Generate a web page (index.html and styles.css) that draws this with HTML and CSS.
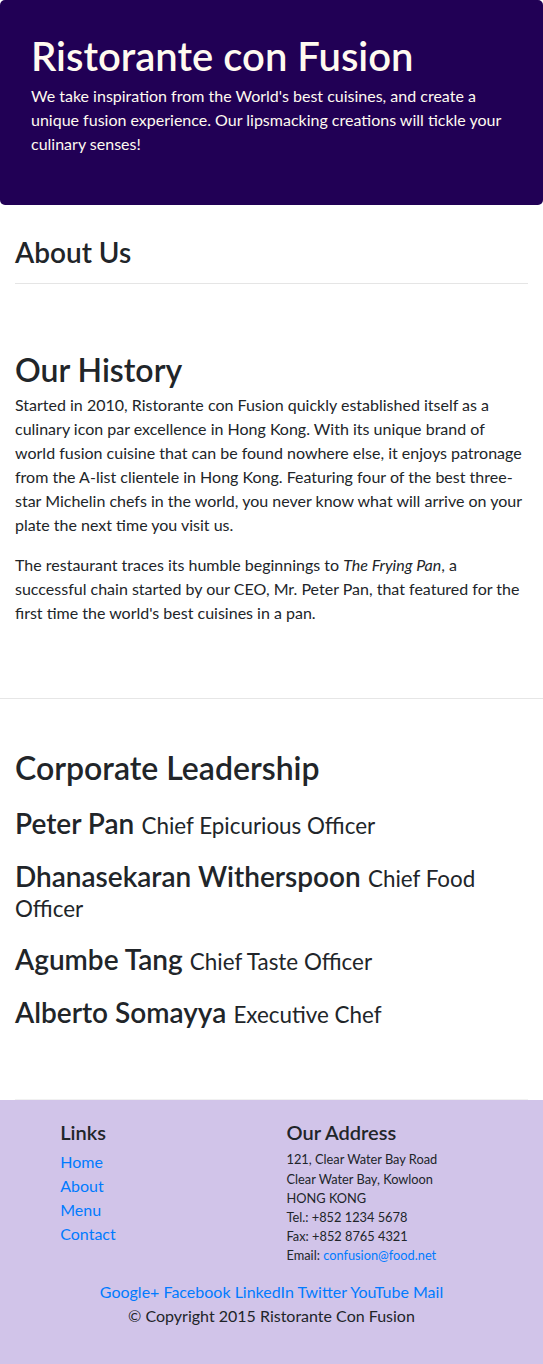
FILE: index.html
```html
<!DOCTYPE html>
<html lang="en">
<head>
<meta charset="utf-8">
<title>Ristorante con Fusion - About Us</title>
<link rel="stylesheet" href="styles.css">
</head>
<body>
<header class="jumbotron">
  <div class="jumbo-inner">
    <h1 class="jumbo-title">Ristorante con Fusion</h1>
    <p class="jumbo-text">We take inspiration from the World's best cuisines, and create a unique fusion experience. Our lipsmacking creations will tickle your culinary senses!</p>
  </div>
</header>

<main class="container">
  <div class="page-head">
    <h3 class="page-title">About Us</h3>
    <hr class="page-rule">
  </div>

  <section class="row-content history">
    <h2 class="section-title">Our History</h2>
    <p class="para">Started in 2010, Ristorante con Fusion quickly established itself as a culinary icon par excellence in Hong Kong. With its unique brand of world fusion cuisine that can be found nowhere else, it enjoys patronage from the A-list clientele in Hong Kong. Featuring four of the best three-star Michelin chefs in the world, you never know what will arrive on your plate the next time you visit us.</p>
    <p class="para">The restaurant traces its humble beginnings to <em>The Frying Pan</em>, a successful chain started by our CEO, Mr. Peter Pan, that featured for the first time the world's best cuisines in a pan.</p>
  </section>

  <section class="row-content leadership">
    <h2 class="section-title lead-title">Corporate Leadership</h2>
    <div class="leader"><span class="leader-name">Peter Pan</span> <small class="leader-role">Chief Epicurious Officer</small></div>
    <div class="leader"><span class="leader-name">Dhanasekaran Witherspoon</span> <small class="leader-role">Chief Food Officer</small></div>
    <div class="leader"><span class="leader-name">Agumbe Tang</span> <small class="leader-role">Chief Taste Officer</small></div>
    <div class="leader"><span class="leader-name">Alberto Somayya</span> <small class="leader-role">Executive Chef</small></div>
  </section>
</main>

<footer class="footer">
  <div class="footer-row">
    <div class="footer-col links-col">
      <h5 class="footer-title">Links</h5>
      <ul class="footer-links">
        <li><a href="#">Home</a></li>
        <li><a href="#">About</a></li>
        <li><a href="#">Menu</a></li>
        <li><a href="#">Contact</a></li>
      </ul>
    </div>
    <div class="footer-col address-col">
      <h5 class="footer-title">Our Address</h5>
      <address class="address">
        121, Clear Water Bay Road<br>
        Clear Water Bay, Kowloon<br>
        HONG KONG<br>
        Tel.: +852 1234 5678<br>
        Fax: +852 8765 4321<br>
        Email: <a href="#">confusion@food.net</a>
      </address>
    </div>
  </div>
  <div class="social">
    <a href="#">Google+</a> <a href="#">Facebook</a> <a href="#">LinkedIn</a> <a href="#">Twitter</a> <a href="#">YouTube</a> <a href="#">Mail</a>
  </div>
  <p class="copyright">© Copyright 2015 Ristorante Con Fusion</p>
</footer>
</body>
</html>
```
FILE: styles.css
```css
html, body {
  margin: 0;
  padding: 0;
}
body {
  font-family: Lato, "Liberation Sans", sans-serif;
  font-size: 16px;
  line-height: 24px;
  color: #212529;
  background: #fff;
}
a {
  color: #007bff;
  text-decoration: none;
}

/* Jumbotron */
.jumbotron {
  background: #210055;
  color: #fffaf0;
  border-radius: 5px;
  padding: 32px 16px 33px;
  margin: 0 0 31px;
}
.jumbo-inner {
  padding: 0 15px;
}
.jumbo-title {
  font-size: 40px;
  line-height: 48px;
  font-weight: 600;
  margin: 0 0 4px;
}
.jumbo-text {
  margin: 0 0 16px;
}

/* Main */
.container {
  padding: 0 15px;
}
.page-title {
  font-size: 28px;
  line-height: 33.6px;
  font-weight: 600;
  margin: 0 0 13px;
}
.page-rule {
  border: 0;
  border-top: 1px solid rgba(0, 0, 0, 0.1);
  margin: 0 0 17px;
}
.history {
  margin: 0 -15px;
  padding: 50px 15px 57px;
  border-bottom: 1px solid #e6e6e6;
}
.section-title {
  font-size: 32px;
  line-height: 38.4px;
  font-weight: 600;
  margin: 0 0 4px;
}
.para {
  margin: 0 0 16px;
}
.leadership {
  padding: 50px 0 49px;
  border-bottom: 1px solid #f1f1f1;
}
.lead-title {
  margin-bottom: 21px;
}
.leader {
  font-size: 28px;
  line-height: 30px;
  margin: 0 0 23px;
}
.leader-name {
  font-weight: 600;
}
.leader-role {
  font-size: 22.4px;
  line-height: 1;
  font-weight: 400;
}

/* Footer */
.footer {
  background: #d1c4e9;
  padding: 20px 0;
}
.footer-row {
  display: flex;
}
.footer-col {
  padding: 0 15px;
  box-sizing: border-box;
}
.links-col {
  margin-left: 45.25px;
  width: 181px;
}
.address-col {
  margin-left: 45.25px;
  width: 256px;
}
.footer-title {
  font-size: 20px;
  line-height: 24px;
  font-weight: 600;
  margin: 0 0 6px;
}
.footer-links {
  list-style: none;
  margin: 0;
  padding: 0;
}
.address {
  font-style: normal;
  font-size: 12.8px;
  line-height: 19.2px;
  margin: 0 0 14px;
}
.social {
  text-align: center;
}
.copyright {
  text-align: center;
  margin: 0 0 16px;
}
```
